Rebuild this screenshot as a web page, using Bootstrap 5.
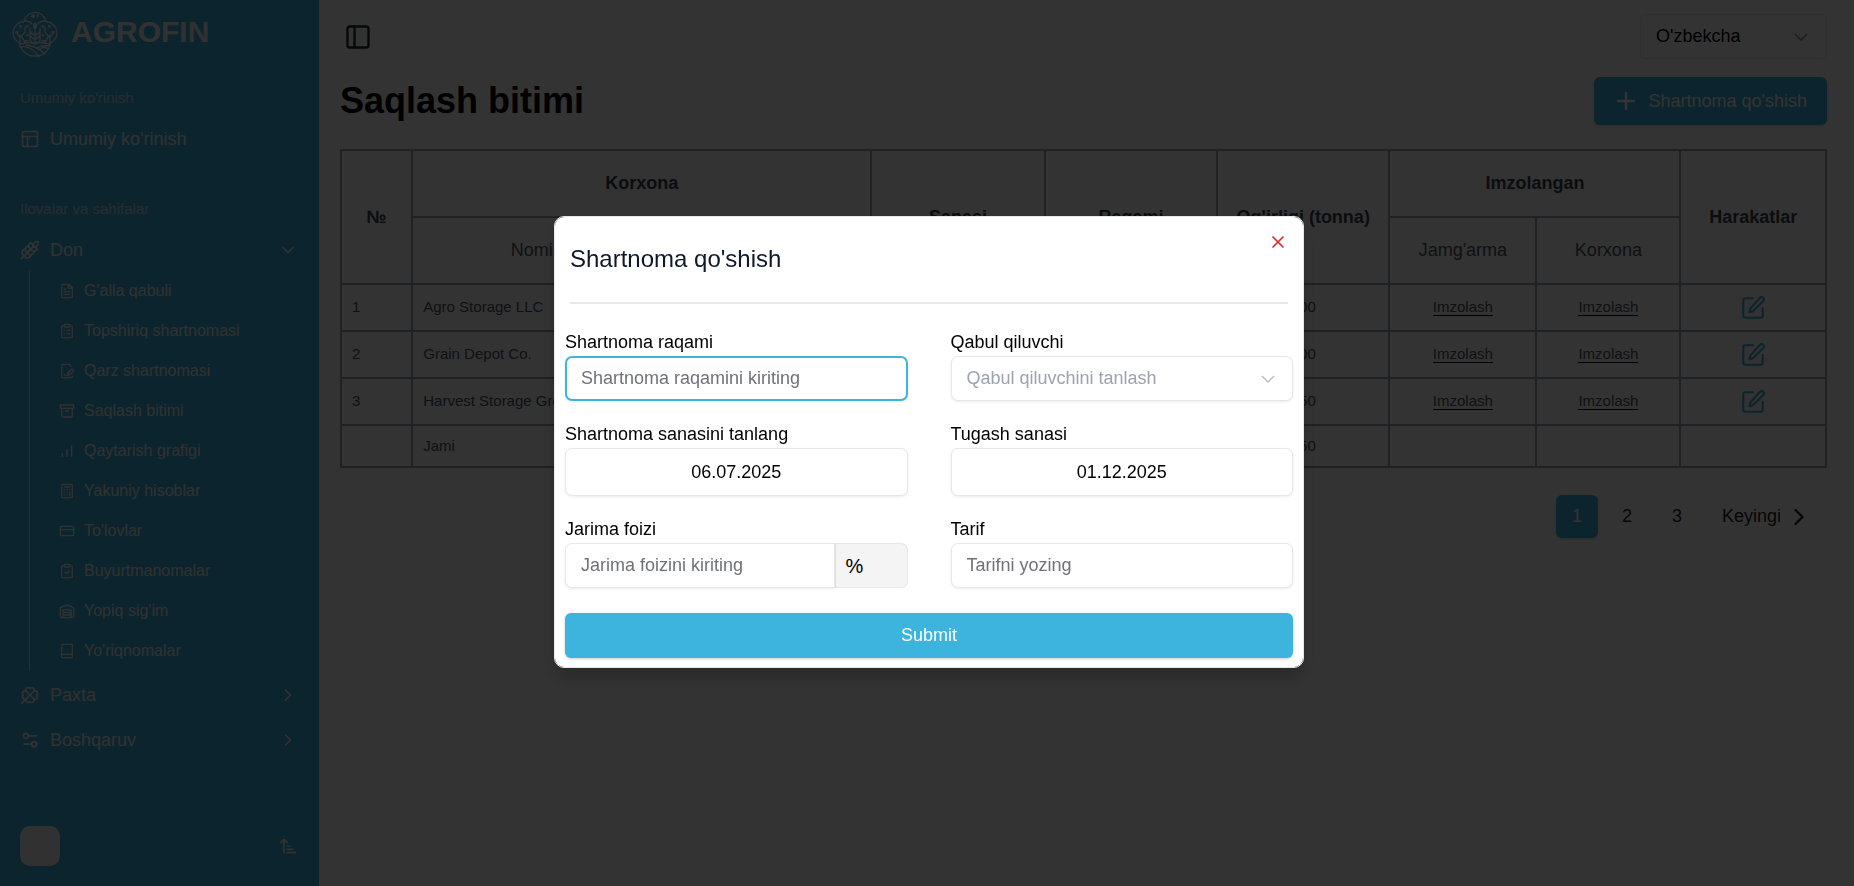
<!DOCTYPE html>
<html lang="uz">
<head>
<meta charset="utf-8">
<meta name="viewport" content="width=device-width, initial-scale=1">
<title>Agrofin – Saqlash bitimi</title>
<link href="https://cdn.jsdelivr.net/npm/bootstrap@5.3.0/dist/css/bootstrap.min.css" rel="stylesheet">
<style>
  :root { --brand: #3cb4de; --line: #e5e7eb; }
  body { font-family: "Liberation Sans", Arial, sans-serif; font-size: 18px; color: #000; background: #fff; }
  a { color: inherit; text-decoration: none; }
  .ico { width: 20px; height: 20px; fill: none; stroke: currentColor; stroke-width: 2; stroke-linecap: round; stroke-linejoin: round; flex: none; }
  .ico-lg { width: 28px; height: 28px; }

  .side { width: 320px; flex: none; background: var(--brand); border-right: 1px solid #fff; color: #f5f5f5; }
  .brand { height: 78px; padding: 9px 11px; gap: 12px; font-size: 30px; line-height: 45px; }
  .brand svg { width: 48px; height: 49px; }
  .side-label { height: 40px; line-height: 40px; padding-left: 20px; font-size: 15px; opacity: .7; }
  .side-label-next { margin-top: 29px; }
  .side-item { height: 42px; padding: 0 21px 0 20px; gap: 10px; }
  .side-sub { margin-left: 29px; border-left: 1px solid rgba(255,255,255,.7); font-size: 16px; }
  .side-sub a { height: 40px; padding-left: 29px; gap: 9px; }
  .side-sub .ico { width: 16px; height: 16px; }
  .side-group { margin-top: 3px; }
  .avatar { width: 40px; height: 40px; border-radius: 10px; background: #f5f5f5; }

  .page { padding: 14px 27px 15px 20px; min-width: 0; }
  .lang { width: 187px; height: 45px; font-size: 18px; border-color: var(--line); color: #000; padding-left: 15px;
    background-position: right 17px center; background-size: 16px;
    background-image: url("data:image/svg+xml,%3Csvg xmlns='http://www.w3.org/2000/svg' viewBox='0 0 16 16' fill='none' stroke='%23888' stroke-width='1.3'%3E%3Cpath d='M2 5l6 6 6-6'/%3E%3C/svg%3E"); }
  .title-row { margin: 18px 0 24px; }
  h1 { font-size: 36px; font-weight: 700; }
  .btn-brand { background: var(--brand); color: #fff; font-size: 18px; border: 0; border-radius: 6px; box-shadow: 0 1px 3px rgba(0,0,0,.2); }
  .btn-add { height: 48px; padding: 0 20px 0 18px; gap: 8px; }

  .deals { table-layout: fixed; border-collapse: collapse; font-size: 15px; color: #4b5563; width: 100%; margin: 0; }
  .deals th, .deals td { border: 2px solid #9ca3af; padding: 0 10px; height: 47px; }
  .deals thead th { height: 67px; font-size: 18px; text-align: center; color: #374151; white-space: nowrap; }
  .deals thead .subhead { font-weight: 400; color: #4b5563; }
  .deals .sum td { height: 42px; }
  .sign { border-bottom: 1px solid #000; }
  .deals .ico { width: 26px; height: 26px; color: var(--brand); }
  .pager { margin-top: 27px; padding-right: 14px; gap: 8px; }
  .pager .btn { height: 43px; min-width: 42px; padding: 0; font-size: 18px; }

  .modal-backdrop { --bs-backdrop-opacity: .8; }
  .modal { padding: 0 0 2px 4px; }
  .modal-dialog { --bs-modal-width: 750px; }
  .modal-content { border: 1px solid var(--line); border-radius: 10px; color: #000; padding: 0 10px 9px; box-shadow: 0 10px 15px rgba(0,0,0,.2); }
  .sheet-head { height: 87px; margin: 0 5px; border-bottom: 2px solid var(--line); }
  .sheet-title { font-size: 24px; line-height: 83px; color: #0f172a; font-weight: 400; margin: 0; }
  .x-btn { width: 20px; height: 20px; margin-top: 15px; color: #dc2626; }
  .x-btn .ico { display: block; }
  .fields { margin-top: 25px; display: grid; grid-template-columns: 1fr 1fr; column-gap: 43px; row-gap: 20px; }
  .fields label { display: block; line-height: 27px; }
  .field { height: 45px; font-size: 18px; padding: 0 15px; border: 1px solid var(--line); border-radius: 7px; box-shadow: 0 1px 3px rgba(0,0,0,.08); }
  .field::placeholder { color: #71717a; }
  .field-focus, .field-focus:focus { border: 2px solid var(--brand); padding: 0 14px; }
  .date-btn { height: 48px; background: #fff; color: #000; }
  .pick { color: #9ca3af; background-position: right 16px center; background-size: 16px;
    background-image: url("data:image/svg+xml,%3Csvg xmlns='http://www.w3.org/2000/svg' viewBox='0 0 16 16' fill='none' stroke='%23bbb' stroke-width='1.3'%3E%3Cpath d='M2 5l6 6 6-6'/%3E%3C/svg%3E"); }
  .unit { width: 74px; padding: 0 10px; font-size: 20px; color: #000; background: #f4f4f5; border: 1px solid var(--line); border-left-width: 2px; border-radius: 7px; }
  .submit { height: 45px; margin-top: 25px; }
</style>
</head>
<body>
<div class="d-flex min-vh-100">
  <aside class="side d-flex flex-column">
    <a href="#" class="brand d-flex fw-bold">
      <svg viewBox="0 0 48 49" fill="none" stroke="currentColor" stroke-width="1.3" stroke-linecap="round" aria-hidden="true">
        <path d="M13 12.500A11.200 11.200 0 0 1 35 12.500A11.300 11.300 0 0 1 39.500 34A15.700 15.700 0 0 1 8.500 34A11.300 11.300 0 0 1 13 12.500"/>
        <path d="M9 35Q24 32 39 35M9 38Q20 36 28 48M15 36Q26 37 34 45M39 37Q31 36 25 39M38 40Q33 37 29 40"/>
        <path d="M24 14v22M24 14q-3 3 0 6q3-3 0-6M19 19v12q1 3 5 4q4-1 5-4V19M19 22q1 3 5 4q4-1 5-4M19 26q1 3 5 4q4-1 5-4"/>
        <path d="M9 34V26M9 28l-4-5M9 29l5-6v-5M14 34l-3-6M39 34V26M39 28l4-5M39 29l-5-6v-5M34 34l3-6M14 12q5 0 7 3M34 12q-5 0-7 3"/>
        <g fill="currentColor" stroke-width=".5"><circle cx="22" cy="7" r="1.700"/><path d="M26 5v4q3-2 0-4M8 17l3-1-1 3zM4 23l3-1v2zM15 17l3-1-2 3zM40 17l-3-1 1 3zM44 23l-3-1v2zM33 17l-3-1 2 3zM14 31l4 1-4 1zM34 31l-4 1 4 1zM15 26l2-1v2zM33 26l-2-1v2z"/></g>
      </svg>
      <span>AGROFIN</span>
    </a>
    <div class="side-label">Umumiy ko'rinish</div>
    <a href="#" class="side-item d-flex align-items-center"><svg class="ico" viewBox="0 0 24 24"><rect x="3" y="3" width="18" height="18" rx="2"/><path d="M3 9h18M9 21V9"/></svg>Umumiy ko'rinish</a>
    <div class="side-label side-label-next">Ilovalar va sahifalar</div>
    <a href="#" class="side-item d-flex align-items-center"><svg class="ico" viewBox="0 0 24 24"><path d="M2 22 16 8M3.470 12.530 5 11l1.530 1.530a3.500 3.500 0 0 1 0 4.940L5 19l-1.530-1.530a3.500 3.500 0 0 1 0-4.940ZM7.470 8.530 9 7l1.530 1.530a3.500 3.500 0 0 1 0 4.940L9 15l-1.530-1.530a3.500 3.500 0 0 1 0-4.940ZM11.470 4.530 13 3l1.530 1.530a3.500 3.500 0 0 1 0 4.940L13 11l-1.530-1.530a3.500 3.500 0 0 1 0-4.940ZM20 2h2v2a4 4 0 0 1-4 4h-2V6a4 4 0 0 1 4-4ZM11.470 17.470 13 19l-1.530 1.530a3.500 3.500 0 0 1-4.940 0L5 19l1.530-1.530a3.500 3.500 0 0 1 4.940 0ZM15.470 13.470 17 15l-1.530 1.530a3.500 3.500 0 0 1-4.940 0L9 15l1.530-1.530a3.500 3.500 0 0 1 4.940 0ZM19.470 9.470 21 11l-1.530 1.530a3.500 3.500 0 0 1-4.940 0L13 11l1.530-1.530a3.500 3.500 0 0 1 4.940 0Z"/></svg>Don<svg class="ico ms-auto" viewBox="0 0 24 24"><path d="m6 9 6 6 6-6"/></svg></a>
    <nav class="side-sub" aria-label="Don">
      <a href="#" class="d-flex align-items-center"><svg class="ico" viewBox="0 0 24 24"><path d="M15 2H6a2 2 0 0 0-2 2v16a2 2 0 0 0 2 2h12a2 2 0 0 0 2-2V7ZM14 2v4a2 2 0 0 0 2 2h4M10 9H8M16 13H8M16 17H8"/></svg>G'alla qabuli</a>
      <a href="#" class="d-flex align-items-center"><svg class="ico" viewBox="0 0 24 24"><rect x="8" y="2" width="8" height="4" rx="1"/><path d="M16 4h2a2 2 0 0 1 2 2v14a2 2 0 0 1-2 2H6a2 2 0 0 1-2-2V6a2 2 0 0 1 2-2h2M12 11h4M12 16h4M8 11h.01M8 16h.01"/></svg>Topshiriq shartnomasi</a>
      <a href="#" class="d-flex align-items-center"><svg class="ico" viewBox="0 0 24 24"><path d="m18 5-2.400-2.400A2 2 0 0 0 14.200 2H6a2 2 0 0 0-2 2v16a2 2 0 0 0 2 2h12a2 2 0 0 0 2-2M21.400 12.600a2 2 0 1 0-3-3l-5 5a2 2 0 0 0-.5.900l-.8 2.900 2.900-.8a2 2 0 0 0 .9-.5ZM8 18h1"/></svg>Qarz shartnomasi</a>
      <a href="#" class="d-flex align-items-center"><svg class="ico" viewBox="0 0 24 24"><rect x="2" y="3" width="20" height="5" rx="1"/><path d="M4 8v11a2 2 0 0 0 2 2h12a2 2 0 0 0 2-2V8M10 12h4"/></svg>Saqlash bitimi</a>
      <a href="#" class="d-flex align-items-center"><svg class="ico" viewBox="0 0 24 24"><path d="M12 20V10M19 20V4M5 20v-4"/></svg>Qaytarish grafigi</a>
      <a href="#" class="d-flex align-items-center"><svg class="ico" viewBox="0 0 24 24"><rect x="4" y="2" width="16" height="20" rx="2"/><path d="M8 6h8M16 14v4M16 10h.01M12 10h.01M8 10h.01M12 14h.01M8 14h.01M12 18h.01M8 18h.01"/></svg>Yakuniy hisoblar</a>
      <a href="#" class="d-flex align-items-center"><svg class="ico" viewBox="0 0 24 24"><rect x="2" y="5" width="20" height="14" rx="2"/><path d="M2 10h20"/></svg>To'lovlar</a>
      <a href="#" class="d-flex align-items-center"><svg class="ico" viewBox="0 0 24 24"><rect x="8" y="2" width="8" height="4" rx="1"/><path d="M16 4h2a2 2 0 0 1 2 2v14a2 2 0 0 1-2 2H6a2 2 0 0 1-2-2V6a2 2 0 0 1 2-2h2M9 14l2 2 4-4"/></svg>Buyurtmanomalar</a>
      <a href="#" class="d-flex align-items-center"><svg class="ico" viewBox="0 0 24 24"><path d="M22 8.350V20a2 2 0 0 1-2 2H4a2 2 0 0 1-2-2V8.350A2 2 0 0 1 3.260 6.500l8-3.200a2 2 0 0 1 1.480 0l8 3.200A2 2 0 0 1 22 8.350ZM6 18h12M6 14h12M6 22V10h12v12"/></svg>Yopiq sig'im</a>
      <a href="#" class="d-flex align-items-center"><svg class="ico" viewBox="0 0 24 24"><path d="M4 19.500V4a2 2 0 0 1 2-2h14v20H6a2 2 0 0 1 0-5h14"/></svg>Yo'riqnomalar</a>
    </nav>
    <a href="#" class="side-item side-group d-flex align-items-center"><svg class="ico" viewBox="0 0 24 24"><path d="M16.170 7.830 2 22M4.020 12a2.827 2.827 0 1 1 3.810-4.170A2.827 2.827 0 1 1 12 4.020a2.827 2.827 0 1 1 4.170 3.810A2.827 2.827 0 1 1 19.980 12a2.827 2.827 0 1 1-3.810 4.170A2.827 2.827 0 1 1 12 19.980a2.827 2.827 0 1 1-4.170-3.810A1 1 0 1 1 4 12M7.830 7.830l8.340 8.340"/></svg>Paxta<svg class="ico ms-auto" viewBox="0 0 24 24"><path d="m9 6 6 6-6 6"/></svg></a>
    <a href="#" class="side-item side-group d-flex align-items-center"><svg class="ico" viewBox="0 0 24 24"><path d="M20 7h-9M14 17H5"/><circle cx="17" cy="17" r="3"/><circle cx="7" cy="7" r="3"/></svg>Boshqaruv<svg class="ico ms-auto" viewBox="0 0 24 24"><path d="m9 6 6 6-6 6"/></svg></a>
    <div class="side-item d-flex align-items-center mt-auto mb-3 pb-1 h-auto">
      <span class="avatar"></span>
      <svg class="ico ms-auto" viewBox="0 0 24 24"><path d="m3 8 4-4 4 4M7 4v16M11 12h4M11 16h7M11 20h10"/></svg>
    </div>
  </aside>

  <main class="page flex-grow-1">
    <div class="d-flex justify-content-between align-items-center">
      <button type="button" class="btn p-0 ms-1 border-0 d-flex" aria-label="Menyu"><svg class="ico ico-lg" viewBox="0 0 24 24"><rect x="3" y="3" width="18" height="18" rx="2"/><path d="M9 3v18"/></svg></button>
      <select class="form-select lang" aria-label="Til"><option>O'zbekcha</option></select>
    </div>
    <div class="title-row d-flex justify-content-between align-items-center">
      <h1 class="m-0">Saqlash bitimi</h1>
      <button type="button" class="btn btn-brand btn-add d-flex align-items-center"><svg class="ico ico-lg" viewBox="0 0 24 24"><path d="M5 12h14M12 5v14"/></svg>Shartnoma qo'shish</button>
    </div>
    <table class="deals">
      <colgroup><col style="width:4.8%"><col style="width:16.1%"><col style="width:14.8%"><col style="width:11.7%"><col style="width:11.6%"><col style="width:11.6%"><col style="width:9.9%"><col style="width:9.7%"><col style="width:9.8%"></colgroup>
      <thead>
        <tr><th rowspan="2">№</th><th colspan="2">Korxona</th><th rowspan="2">Sanasi</th><th rowspan="2">Raqami</th><th rowspan="2">Og'irligi (tonna)</th><th colspan="2">Imzolangan</th><th rowspan="2">Harakatlar</th></tr>
        <tr><th class="subhead">Nomi</th><th class="subhead">STIR</th><th class="subhead">Jamg'arma</th><th class="subhead">Korxona</th></tr>
      </thead>
      <tbody>
        <tr><td>1</td><td>Agro Storage LLC</td><td></td><td></td><td></td><td class="text-center">300</td><td class="text-center"><a href="#" class="sign">Imzolash</a></td><td class="text-center"><a href="#" class="sign">Imzolash</a></td><td class="text-center"><a href="#" aria-label="Tahrirlash"><svg class="ico" viewBox="0 0 24 24"><path d="M12 3H5a2 2 0 0 0-2 2v14a2 2 0 0 0 2 2h14a2 2 0 0 0 2-2v-7M18.400 2.600a2.100 2.100 0 0 1 3 3l-9 9a2 2 0 0 1-.9.500l-2.900.8.800-2.900a2 2 0 0 1 .5-.9Z"/></svg></a></td></tr>
        <tr><td>2</td><td>Grain Depot Co.</td><td></td><td></td><td></td><td class="text-center">200</td><td class="text-center"><a href="#" class="sign">Imzolash</a></td><td class="text-center"><a href="#" class="sign">Imzolash</a></td><td class="text-center"><a href="#" aria-label="Tahrirlash"><svg class="ico" viewBox="0 0 24 24"><path d="M12 3H5a2 2 0 0 0-2 2v14a2 2 0 0 0 2 2h14a2 2 0 0 0 2-2v-7M18.400 2.600a2.100 2.100 0 0 1 3 3l-9 9a2 2 0 0 1-.9.500l-2.900.8.800-2.900a2 2 0 0 1 .5-.9Z"/></svg></a></td></tr>
        <tr><td>3</td><td class="text-nowrap">Harvest Storage Group</td><td></td><td></td><td></td><td class="text-center">150</td><td class="text-center"><a href="#" class="sign">Imzolash</a></td><td class="text-center"><a href="#" class="sign">Imzolash</a></td><td class="text-center"><a href="#" aria-label="Tahrirlash"><svg class="ico" viewBox="0 0 24 24"><path d="M12 3H5a2 2 0 0 0-2 2v14a2 2 0 0 0 2 2h14a2 2 0 0 0 2-2v-7M18.400 2.600a2.100 2.100 0 0 1 3 3l-9 9a2 2 0 0 1-.9.500l-2.900.8.800-2.900a2 2 0 0 1 .5-.9Z"/></svg></a></td></tr>
        <tr class="sum"><td></td><td>Jami</td><td></td><td></td><td></td><td class="text-center">650</td><td></td><td></td><td></td></tr>
      </tbody>
    </table>
    <nav class="pager d-flex justify-content-end" aria-label="Sahifalar">
      <button type="button" class="btn btn-brand">1</button>
      <button type="button" class="btn border-0">2</button>
      <button type="button" class="btn border-0">3</button>
      <button type="button" class="btn border-0 ms-3 d-flex align-items-center gap-1">Keyingi<svg class="ico ico-lg" viewBox="0 0 24 24"><path d="m9 6 6 6-6 6"/></svg></button>
    </nav>
  </main>
</div>

<div class="modal-backdrop show"></div>
<div class="modal show d-block" role="dialog" aria-modal="true" aria-labelledby="sheetTitle">
  <div class="modal-dialog modal-dialog-centered">
    <form class="modal-content">
      <div class="sheet-head d-flex justify-content-between align-items-start">
        <h2 class="sheet-title" id="sheetTitle">Shartnoma qo'shish</h2>
        <button type="button" class="btn border-0 p-0 x-btn" aria-label="Yopish"><svg class="ico" viewBox="0 0 24 24"><path d="m6 6 12 12M18 6 6 18"/></svg></button>
      </div>
      <div class="fields">
        <div><label for="num">Shartnoma raqami</label><input id="num" type="text" class="form-control field field-focus" placeholder="Shartnoma raqamini kiriting"></div>
        <div><label for="recv">Qabul qiluvchi</label><select id="recv" class="form-select field pick"><option>Qabul qiluvchini tanlash</option></select></div>
        <div><label for="d1">Shartnoma sanasini tanlang</label><button id="d1" type="button" class="btn field date-btn w-100">06.07.2025</button></div>
        <div><label for="d2">Tugash sanasi</label><button id="d2" type="button" class="btn field date-btn w-100">01.12.2025</button></div>
        <div><label for="pen">Jarima foizi</label><div class="input-group"><input id="pen" type="text" class="form-control field" placeholder="Jarima foizini kiriting"><span class="input-group-text unit">%</span></div></div>
        <div><label for="tar">Tarif</label><input id="tar" type="text" class="form-control field" placeholder="Tarifni yozing"></div>
      </div>
      <button type="submit" class="btn btn-brand submit">Submit</button>
    </form>
  </div>
</div>
<script src="https://cdn.jsdelivr.net/npm/bootstrap@5.3.0/dist/js/bootstrap.bundle.min.js"></script>
</body>
</html>
